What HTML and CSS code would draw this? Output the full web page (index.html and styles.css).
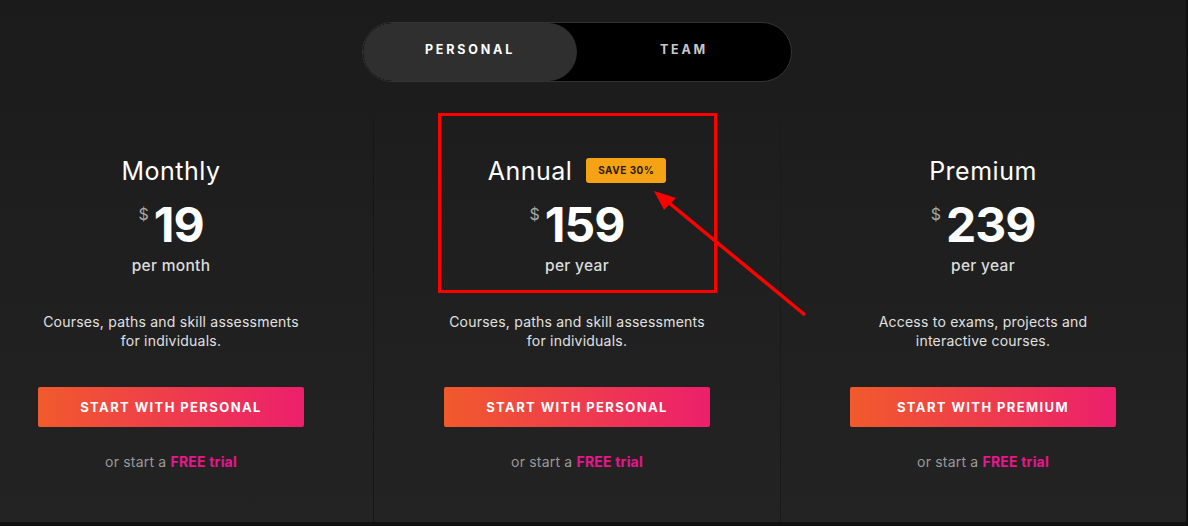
FILE: index.html
```html
<!DOCTYPE html>
<html lang="en">
<head>
<meta charset="utf-8">
<title>Pricing</title>
<link rel="stylesheet" href="styles.css">
</head>
<body>
<div class="page">
  <div class="stage">
    <div class="toggle">
      <div class="tab active">PERSONAL</div>
      <div class="tab">TEAM</div>
    </div>
    <div class="plans">
      <div class="plan">
        <div class="title-row"><span class="title">Monthly</span></div>
        <div class="price"><span class="cur">$</span><span class="amt">19</span></div>
        <div class="period">per month</div>
        <p class="desc">Courses, paths and skill assessments<br>for individuals.</p>
        <a class="btn">START WITH PERSONAL</a>
        <div class="trial">or start a <b>FREE trial</b></div>
      </div>
      <div class="plan featured">
        <div class="title-row"><span class="title">Annual</span><span class="badge">SAVE 30%</span></div>
        <div class="price"><span class="cur">$</span><span class="amt">159</span></div>
        <div class="period">per year</div>
        <p class="desc">Courses, paths and skill assessments<br>for individuals.</p>
        <a class="btn">START WITH PERSONAL</a>
        <div class="trial">or start a <b>FREE trial</b></div>
      </div>
      <div class="plan">
        <div class="title-row"><span class="title">Premium</span></div>
        <div class="price"><span class="cur">$</span><span class="amt">239</span></div>
        <div class="period">per year</div>
        <p class="desc">Access to exams, projects and<br>interactive courses.</p>
        <a class="btn">START WITH PREMIUM</a>
        <div class="trial">or start a <b>FREE trial</b></div>
      </div>
    </div>
  </div>
  <svg class="annot" width="1188" height="526" viewBox="0 0 1188 526">
    <rect x="439.5" y="114.5" width="276" height="177" fill="none" stroke="#ff0000" stroke-width="3"/>
    <line x1="805" y1="315" x2="668" y2="202" stroke="#ff0000" stroke-width="3.5"/>
    <polygon points="654,191 676,198 664,210" fill="#ff0000"/>
  </svg>
</div>
</body>
</html>
```

FILE: styles.css
```css
* { box-sizing: border-box; }
html, body { margin: 0; padding: 0; }
body {
  background: #101010;
  font-family: Inter, "Open Sans", "Liberation Sans", sans-serif;
  overflow: hidden;
  width: 1188px;
  height: 526px;
}
.page {
  position: relative;
  width: 1186px;
  height: 522px;
  background: linear-gradient(#1b1b1b, #232323);
  overflow: hidden;
}
.stage {
  width: 1218px;
  margin-left: -32px;
  padding-top: 22px;
  height: 100%;
  display: flex;
  flex-direction: column;
  align-items: center;
}
.toggle {
  display: flex;
  width: 430px;
  height: 60px;
  background: #000;
  border: 1.5px solid #333;
  border-radius: 30px;
  overflow: hidden;
}
.tab {
  flex: 1;
  display: flex;
  align-items: center;
  justify-content: center;
  padding-bottom: 5px;
  color: #c8c8c8;
  font-size: 12.5px;
  font-weight: 700;
  letter-spacing: 2.8px;
  border-radius: 30px;
}
.tab.active {
  flex: 0 0 214px;
  background: #2f2f2f;
  color: #fff;
}
.plans {
  flex: 1;
  width: 100%;
  margin-top: 36px;
  display: grid;
  grid-template-columns: 406px 406px 406px;
}
.plan {
  display: flex;
  flex-direction: column;
  align-items: center;
  padding-top: 38px;
  text-align: center;
}
.plan.featured {
  background: linear-gradient(#1d1d1d, #232323);
  box-shadow: -1px 0 0 #171717, 1px 0 0 #1a1a1a;
}
.title-row {
  display: flex;
  align-items: center;
  gap: 14px;
  height: 30px;
}
.title {
  color: #fff;
  font-size: 25px;
  font-weight: 400;
  line-height: 30px;
  letter-spacing: 0.5px;
}
.badge {
  background: #f5a315;
  color: #2a1a00;
  font-size: 10px;
  font-weight: 700;
  letter-spacing: 0.5px;
  width: 80px;
  height: 25px;
  line-height: 25px;
  border-radius: 3px;
  margin-top: -1px;
}
.price {
  display: flex;
  align-items: flex-start;
  margin-top: 14px;
  height: 50px;
}
.cur {
  color: #a8a8a8;
  font-size: 16px;
  line-height: 16px;
  margin-top: 6px;
  margin-right: 5px;
}
.amt {
  color: #fff;
  font-size: 48px;
  font-weight: 700;
  line-height: 50px;
  letter-spacing: -1px;
}
.period {
  color: #dcdcdc;
  font-size: 15.5px;
  font-weight: 500;
  line-height: 20px;
  letter-spacing: 0.3px;
  margin-top: 6px;
}
.desc {
  color: #e0e0e0;
  font-size: 14px;
  line-height: 19px;
  letter-spacing: 0.22px;
  margin: 36px 0 0;
}
.btn {
  display: flex;
  align-items: center;
  justify-content: center;
  width: 266px;
  height: 40px;
  margin-top: 37px;
  background: linear-gradient(90deg, #f15a2c, #ec1f6c);
  border-radius: 2px;
  color: #fff;
  font-size: 13px;
  font-weight: 700;
  letter-spacing: 1.4px;
}
.trial {
  color: #9a9a9a;
  font-size: 14px;
  line-height: 18px;
  letter-spacing: 0.2px;
  margin-top: 26px;
}
.trial b {
  color: #e8168c;
  font-weight: 700;
}
.annot {
  position: absolute;
  left: 0;
  top: 0;
  pointer-events: none;
}
```
